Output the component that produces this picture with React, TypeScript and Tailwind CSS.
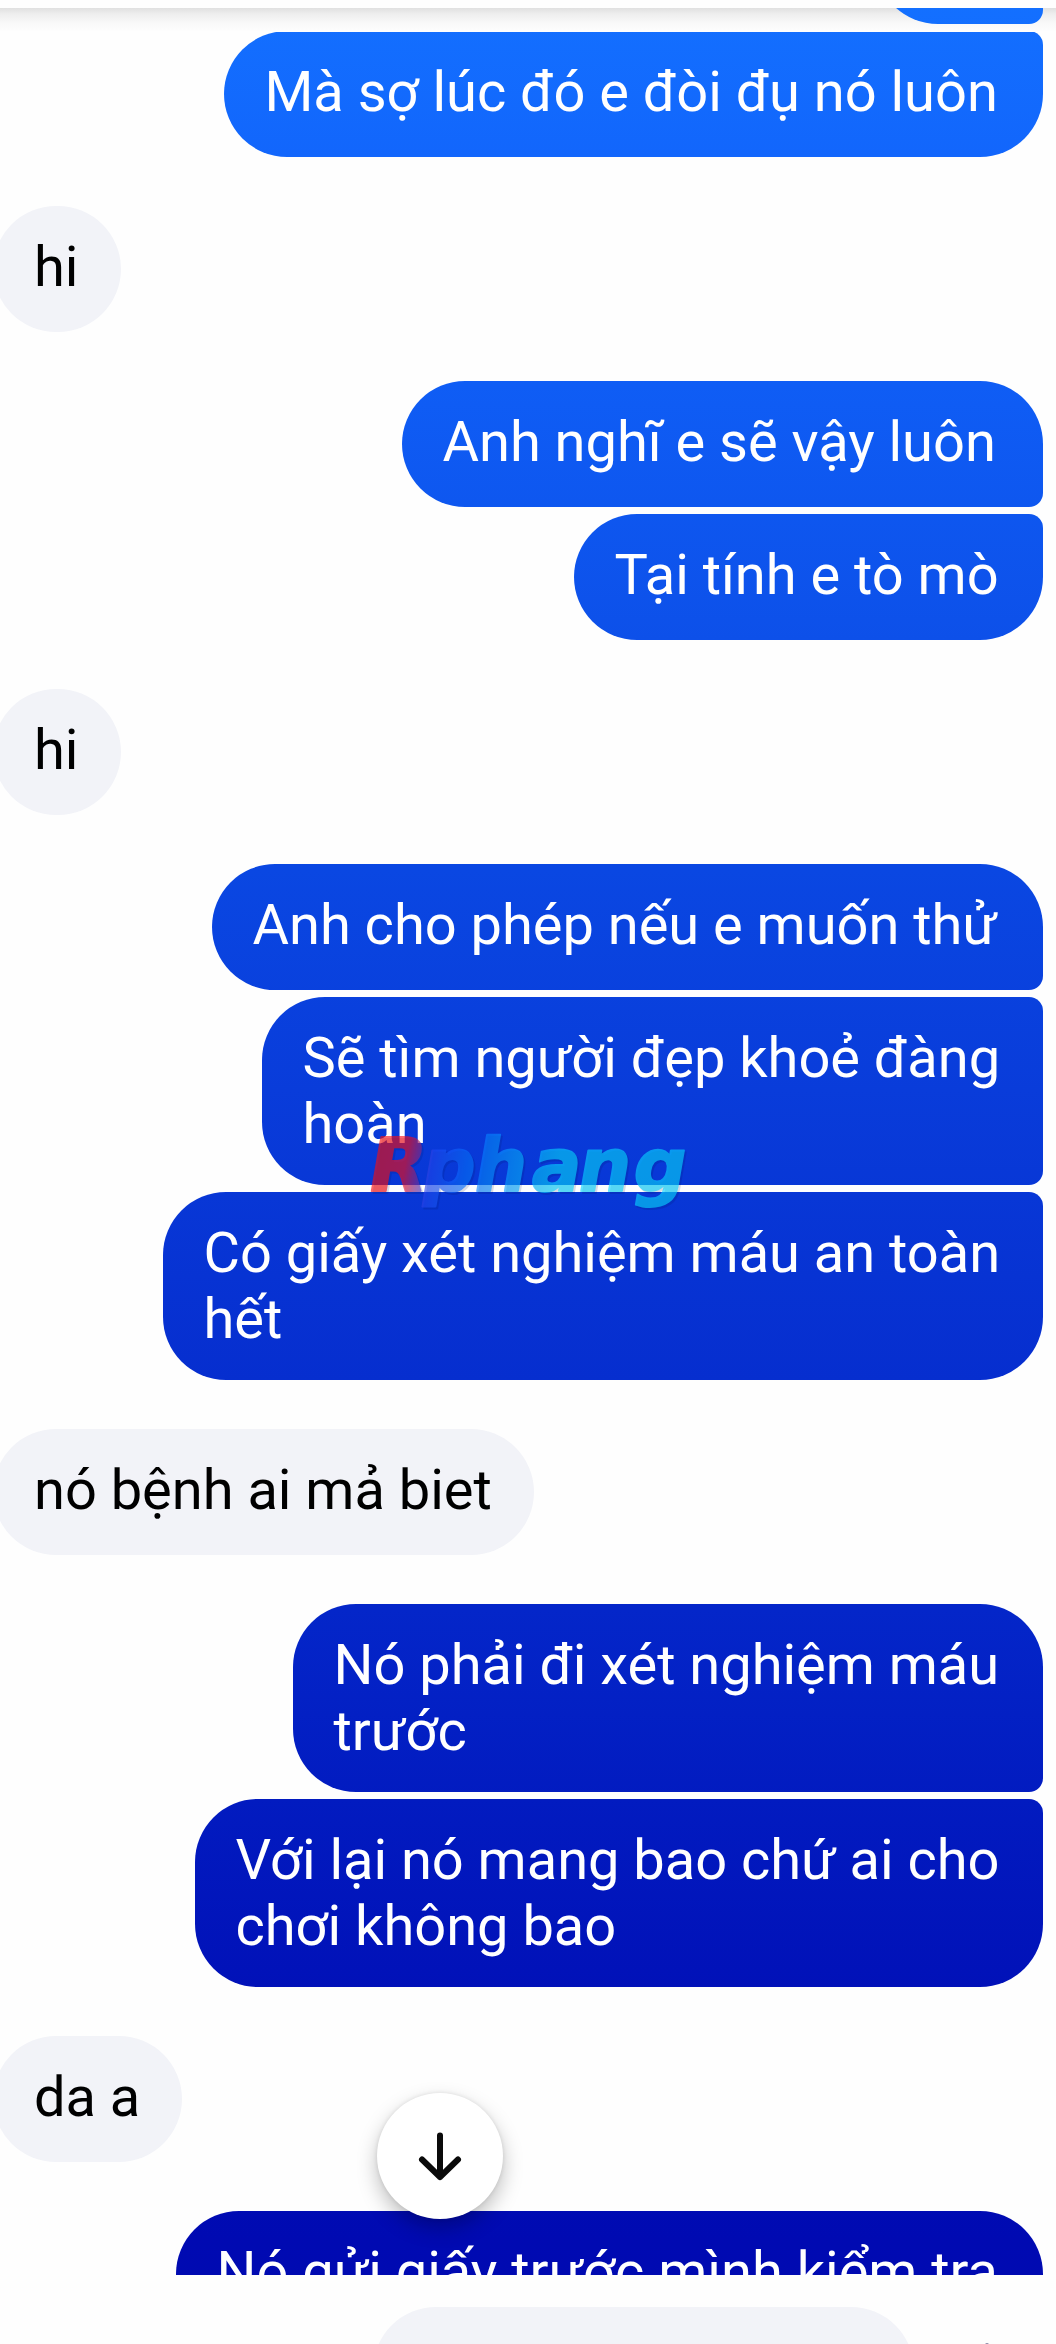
import React from "react";

type Message = {
  from: "me" | "them";
  lines: string[];
  /** Shape of the right-hand corners inside a run of sent messages. */
  shape?: "first" | "middle" | "last";
  width: string;
};

const messages: Message[] = [
  { from: "me", lines: ["Mà sợ lúc đó e đòi đụ nó luôn"], shape: "last", width: "w-[819px]" },
  { from: "them", lines: ["hi"], width: "w-[128px]" },
  { from: "me", lines: ["Anh nghĩ e sẽ vậy luôn"], shape: "first", width: "w-[641px]" },
  { from: "me", lines: ["Tại tính e tò mò"], shape: "last", width: "w-[469px]" },
  { from: "them", lines: ["hi"], width: "w-[128px]" },
  { from: "me", lines: ["Anh cho phép nếu e muốn thử"], shape: "first", width: "w-[831px]" },
  { from: "me", lines: ["Sẽ tìm người đẹp khoẻ đàng", "hoàn"], shape: "middle", width: "w-[781px]" },
  { from: "me", lines: ["Có giấy xét nghiệm máu an toàn", "hết"], shape: "last", width: "w-[880px]" },
  { from: "them", lines: ["nó bệnh ai mả biet"], width: "w-[541px]" },
  { from: "me", lines: ["Nó phải đi xét nghiệm máu", "trước"], shape: "first", width: "w-[750px]" },
  { from: "me", lines: ["Với lại nó mang bao chứ ai cho", "chơi không bao"], shape: "last", width: "w-[848px]" },
  { from: "them", lines: ["da a"], width: "w-[189px]" },
  { from: "me", lines: ["Nó gửi giấy trước mình kiểm tra"], shape: "first", width: "w-[867px]" },
];

const sentFill =
  "bg-fixed bg-[linear-gradient(180deg,#1370ff_0px,#1266fc_156px,#0f5df5_385px,#0d50e9_640px,#0a47e2_870px,#093cda_1090px,#062ecf_1380px,#0426c9_1610px,#021bc0_1800px,#0111b8_1990px,#000ab2_2240px,#000ab0_2344px)]";

const shapes = {
  first: "rounded-[63px] rounded-br-[14px]",
  middle: "rounded-[63px] rounded-r-[14px]",
  last: "rounded-[63px] rounded-tr-[14px]",
};

function Bubble({ message, joined }: { message: Message; joined: boolean }) {
  const mine = message.from === "me";
  return (
    <div
      className={[
        "shrink-0 whitespace-nowrap pt-[28px] pl-[41px] text-[56px] leading-[66px] tracking-[-0.02px]",
        message.width,
        message.lines.length > 1 ? "h-[188px]" : "h-[126px]",
        joined ? "mt-[7px]" : "mt-[49px]",
        mine
          ? "mr-[13.5px] self-end text-white " + sentFill + " " + shapes[message.shape ?? "first"]
          : "-ml-[7px] self-start rounded-[63px] bg-[#f2f3f8] text-black",
      ].join(" ")}
    >
      {message.lines.map((line) => (
        <div key={line}>{line}</div>
      ))}
    </div>
  );
}

function Watermark() {
  const letters = { x: "365 419 471 528 575 630", y: "0" };
  return (
    <svg
      className="pointer-events-none absolute left-0 top-[1120px]"
      width="1056"
      height="100"
      viewBox="0 0 1056 100"
      fontFamily="'DejaVu Sans', sans-serif"
      fontWeight="700"
      fontSize="74"
      strokeWidth="2"
      strokeLinejoin="round"
    >
      <defs>
        <linearGradient id="mark" gradientUnits="userSpaceOnUse" x1="365" y1="0" x2="690" y2="0">
          <stop offset="0" stopColor="#f80d0a" />
          <stop offset="0.11" stopColor="#f80d1a" />
          <stop offset="0.19" stopColor="#2048f4" />
          <stop offset="0.3" stopColor="#0870ff" />
          <stop offset="0.45" stopColor="#09a8ff" />
          <stop offset="0.58" stopColor="#09d5ff" />
          <stop offset="1" stopColor="#09d5ff" />
        </linearGradient>
      </defs>
      <g transform="translate(0 71) skewX(-10)">
        <g opacity="0.14">
          <text {...letters} transform="translate(2 2)" fill="#001050" stroke="#001050">
            Rphang
          </text>
        </g>
        <g opacity="0.62">
          <text {...letters} fill="url(#mark)" stroke="url(#mark)">
            Rphang
          </text>
        </g>
      </g>
    </svg>
  );
}

export default function App() {
  return (
    <div className="relative flex h-[2344px] w-[1056px] flex-col overflow-hidden bg-[#fefefe] font-['Roboto',sans-serif]">
      <div className="h-[8px] shrink-0" />

      <main className="relative flex h-[2267px] shrink-0 flex-col overflow-hidden">
        <div className="pointer-events-none absolute inset-x-0 top-0 h-[24px] bg-[linear-gradient(180deg,#e0e0e0,#eeeeee_25%,#f8f8f8_60%,#fefefe)]" />
        <div
          className={
            "relative -mt-[110px] h-[126px] w-[168px] shrink-0 self-end rounded-[63px] rounded-r-[14px] mr-[13.5px] " +
            sentFill
          }
        />
        {messages.map((message, i) => (
          <Bubble
            key={i}
            message={message}
            joined={i === 0 || (message.from === "me" && messages[i - 1].from === "me")}
          />
        ))}
        <button
          aria-label="Cuộn xuống"
          className="absolute left-[377px] top-[2085px] flex size-[126px] items-center justify-center rounded-full bg-white shadow-[0_9px_20px_rgba(0,0,0,0.25),0_0_4px_rgba(0,0,0,0.1)]"
        >
          <svg width="48" height="54" viewBox="0 0 48 54" fill="none" stroke="#0a0a0a" strokeWidth="6" strokeLinecap="round" strokeLinejoin="round">
            <path d="M24 6.5V48M6 30.5L24 48L42 30.5" />
          </svg>
        </button>
      </main>

      <footer className="flex shrink-0 pl-[373px] pt-[32px]">
        <div className="h-[126px] w-[541px] rounded-[63px] bg-[#f2f3f8]" />
        <div className="ml-[71px] mt-[36px] h-[2px] w-[4px] rounded-t-full bg-[#8d8dab]" />
      </footer>

      <Watermark />
    </div>
  );
}
